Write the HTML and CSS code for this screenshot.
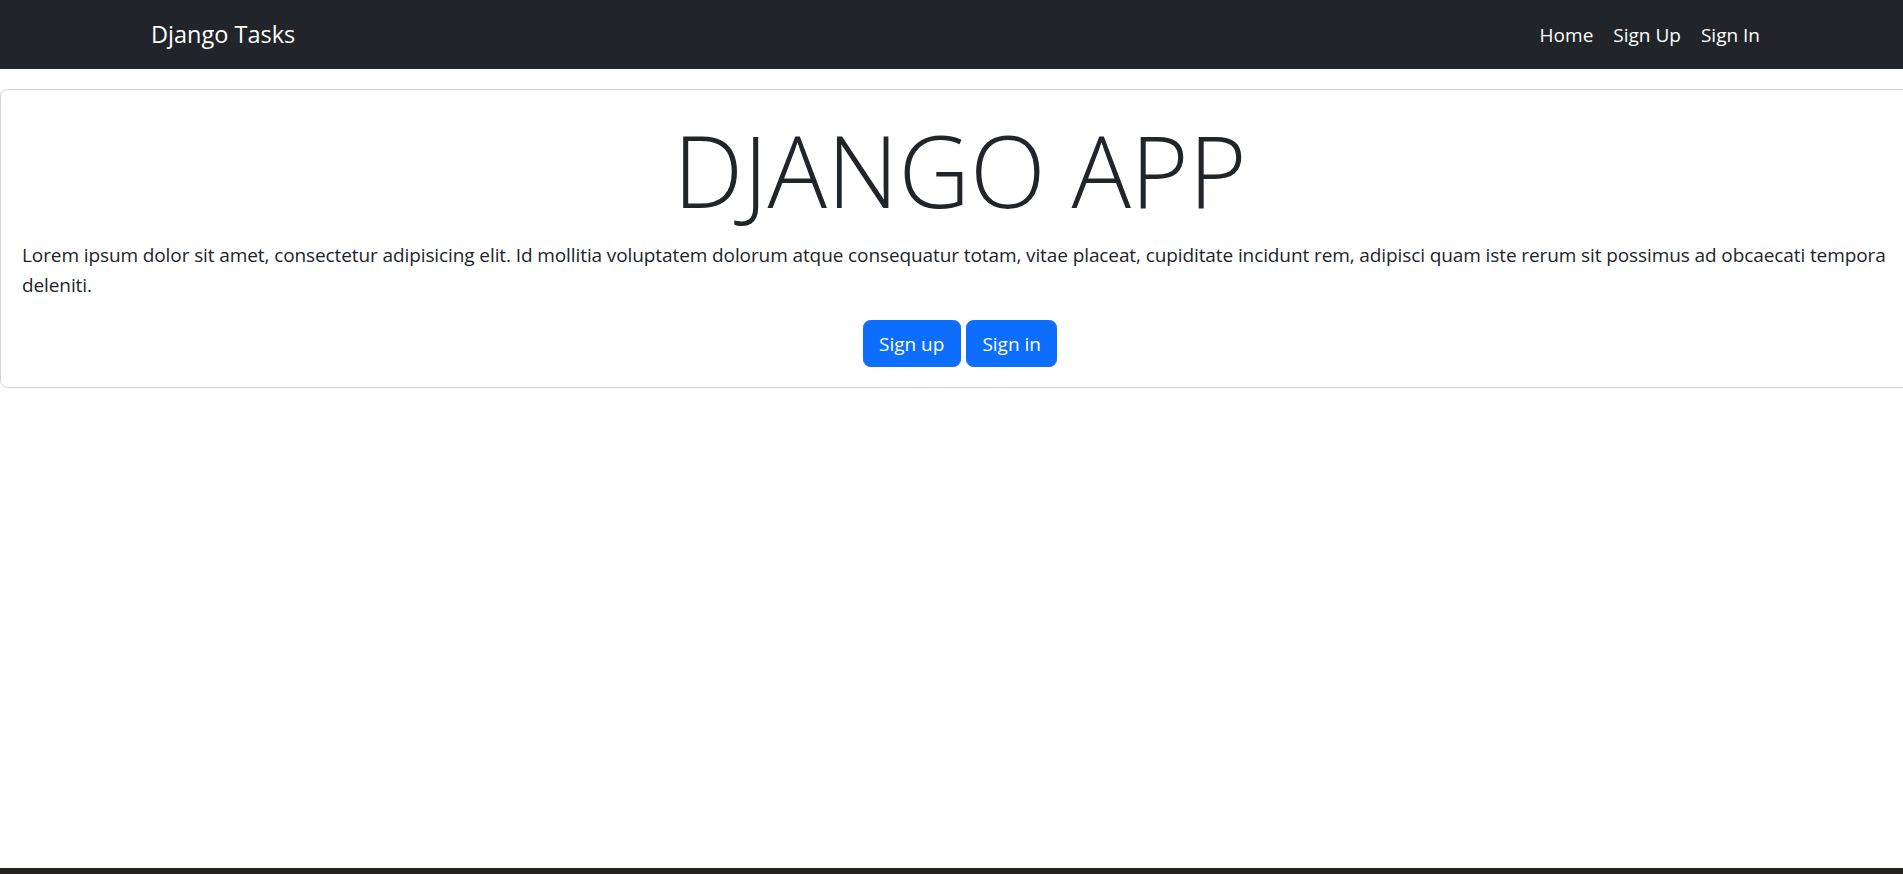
FILE: index.html
```html
<!DOCTYPE html>
<html lang="en">
<head>
<meta charset="utf-8">
<title>Django Tasks</title>
<link rel="stylesheet" href="styles.css">
</head>
<body>
<div class="page">
  <nav class="navbar">
    <div class="container">
      <a class="brand" href="#">Django Tasks</a>
      <ul class="nav-links">
        <li><a class="nav-link" href="#">Home</a></li>
        <li><a class="nav-link" href="#">Sign Up</a></li>
        <li><a class="nav-link" href="#">Sign In</a></li>
      </ul>
    </div>
  </nav>
  <main class="main">
    <section class="card">
      <h1 class="display">DJANGO APP</h1>
      <p class="lead-text">Lorem ipsum dolor sit amet, consectetur adipisicing elit. Id mollitia voluptatem dolorum atque consequatur totam, vitae placeat, cupiditate incidunt rem, adipisci quam iste rerum sit possimus ad obcaecati tempora deleniti.</p>
      <div class="actions">
        <a class="btn" href="#">Sign up</a>
        <a class="btn" href="#">Sign in</a>
      </div>
    </section>
  </main>
  <div class="taskbar"></div>
</div>
</body>
</html>
```
FILE: styles.css
```css
html {
  overflow: hidden;
}
body {
  margin: 0;
  font-family: "Open Sans", "Noto Sans", sans-serif;
  font-size: 19px;
  line-height: 30px;
  color: #212529;
  background: #fff;
}
.page {
  width: 1920px;
  height: 874px;
  display: flex;
  flex-direction: column;
}
.navbar {
  background: #212529;
  padding: 10px 0;
  height: 49px;
}
.container {
  width: 1650px;
  margin: 0 auto;
  padding: 0 15px;
  box-sizing: border-box;
  display: flex;
  align-items: center;
  justify-content: space-between;
  height: 100%;
}
.brand {
  color: #fff;
  text-decoration: none;
  font-size: 23.5px;
  line-height: 37.5px;
  margin-left: 1px;
}
.nav-links {
  list-style: none;
  margin: 0;
  padding: 0;
  display: flex;
}
.nav-link {
  display: block;
  color: #fff;
  text-decoration: none;
  padding: 10px;
  font-size: 19px;
  line-height: 30px;
}
.main {
  flex: 1;
  padding-top: 20px;
}
.card {
  border: 1px solid #d4d4d5;
  border-radius: 7.5px;
  padding: 20px;
}
.display {
  margin: 0 0 10px;
  font-size: 99px;
  font-weight: 300;
  line-height: 120px;
  text-align: center;
}
.lead-text {
  margin: 0 0 20px;
  padding-left: 1px;
  letter-spacing: -0.1px;
}
.actions {
  text-align: center;
  font-size: 0;
}
.btn {
  display: inline-block;
  background: #0d6efd;
  color: #fff;
  text-decoration: none;
  border: 1px solid #0d6efd;
  border-radius: 7.5px;
  padding: 7.5px 15.5px;
  font-size: 19px;
  line-height: 30px;
}
.btn + .btn {
  margin-left: 5px;
}
.taskbar {
  height: 6px;
  background: #24211f;
}
```
